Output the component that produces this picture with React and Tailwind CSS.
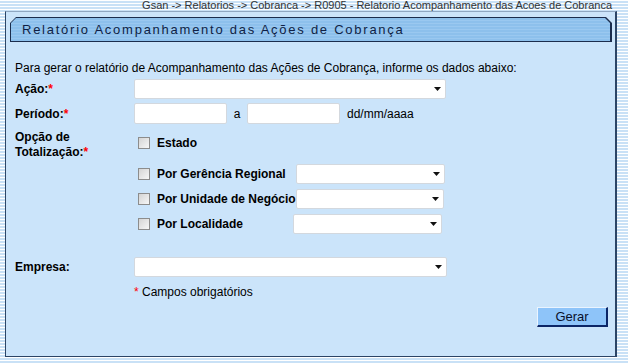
import React from 'react';

const Req = () => <span className="text-[#ff0000]">*</span>;

const Select = ({ w }) => (
  <div className={`${w} h-[20px] bg-white border border-[#d3d8de] rounded-[2px] flex items-center justify-end pr-[4px]`}>
    <svg width="7" height="4" viewBox="0 0 7 4">
      <path d="M0 0h7L3.5 4z" fill="#111" />
    </svg>
  </div>
);

const Box = () => (
  <span className="block w-[12px] h-[12px] border border-[#8c8c8c] bg-[linear-gradient(135deg,#d4d4d4,#f7f7f7)] shrink-0" />
);

const CheckRow = ({ label, labelW, selectW, className = '' }) => (
  <div className={`h-[20px] flex items-center ${className}`}>
    <span className="ml-[4px]"><Box /></span>
    <span className={`ml-[7px] font-bold ${labelW}`}>{label}</span>
    {selectW && <Select w={selectW} />}
  </div>
);

export default function App() {
  return (
    <div
      className="w-[628px] h-[364px] overflow-hidden text-[12px] text-black bg-[repeating-linear-gradient(to_bottom,#ffffff_0px,#ffffff_1px,#c9e1f6_1px,#c9e1f6_3px)]"
      style={{ fontFamily: '"Liberation Sans", Arial, sans-serif' }}
    >
      <div className="h-[11px] flex justify-end pr-[16px] text-[11px] leading-[11px] text-[#333]">
        Gsan -&gt; Relatorios -&gt; Cobranca -&gt; R0905 - Relatorio Acompanhamento das Acoes de Cobranca
      </div>

      <div className="ml-[5px] w-[612px] h-[346px] bg-[#cbe4fa] border border-[#2c4566] border-t-[#8fa7c2] border-r-2">
        {/* title bar */}
        <div className="ml-[4px] mt-[5px] w-[602px] h-[25px] bg-[#1b2d4d] [clip-path:polygon(6px_0,calc(100%-6px)_0,100%_6px,100%_100%,0_100%,0_6px)] pl-px pt-px pr-[2px] pb-px">
          <div className="w-full h-full flex items-center pl-[11px] text-[13px] tracking-[1.75px] text-[#0f1f45] bg-[repeating-linear-gradient(to_bottom,#8dc0ec_0px,#8dc0ec_2px,#9ac8f0_2px,#9ac8f0_3px)] [clip-path:polygon(5px_0,calc(100%-5px)_0,100%_5px,100%_100%,0_100%,0_5px)]">
            Relatório Acompanhamento das Ações de Cobrança
          </div>
        </div>

        <div className="pl-[9px]">
          <div className="mt-[19px] h-[14px] leading-[14px]">
            Para gerar o relatório de Acompanhamento das Ações de Cobrança, informe os dados abaixo:
          </div>

          <div className="mt-[4px] h-[20px] flex items-center">
            <span className="w-[119px] font-bold">Ação:<Req /></span>
            <Select w="w-[312px]" />
          </div>

          <div className="mt-[4px] h-[21px] flex items-center">
            <span className="w-[119px] font-bold">Período:<Req /></span>
            <div className="w-[93px] h-[21px] bg-white border border-[#d3d8de] rounded-[2px]" />
            <span className="w-[20px] text-center">a</span>
            <div className="w-[93px] h-[21px] bg-white border border-[#d3d8de] rounded-[2px]" />
            <span className="ml-[7px]">dd/mm/aaaa</span>
          </div>

          <div className="mt-[6px] flex">
            <div className="w-[119px] font-bold leading-[15px]">
              Opção de<br />Totalização:<Req />
            </div>
            <div>
              <div className="h-[26px] flex items-center">
                <span className="ml-[4px]"><Box /></span>
                <span className="ml-[7px] font-bold">Estado</span>
              </div>
              <CheckRow className="mt-[8px]" label="Por Gerência Regional" labelW="w-[139px]" selectW="w-[149px]" />
              <CheckRow className="mt-[5px]" label="Por Unidade de Negócio" labelW="w-[139px]" selectW="w-[148px]" />
              <CheckRow className="mt-[5px]" label="Por Localidade" labelW="w-[136px]" selectW="w-[149px]" />
            </div>
          </div>

          <div className="mt-[23px] h-[20px] flex items-center">
            <span className="w-[119px] font-bold">Empresa:</span>
            <Select w="w-[313px]" />
          </div>

          <div className="mt-[8px] h-[14px] leading-[14px] pl-[119px]">
            <Req /> Campos obrigatórios
          </div>
        </div>

        <div className="mt-[8px] flex justify-end pr-[7px]">
          <button className="w-[71px] h-[20px] bg-[#8ec4f9] border border-[#eaf4ff] border-r-[#0b2566] border-b-[#0b2566] border-r-2 border-b-2 text-[13px] leading-none text-[#0a0f2a]">
            Gerar
          </button>
        </div>
      </div>
    </div>
  );
}
